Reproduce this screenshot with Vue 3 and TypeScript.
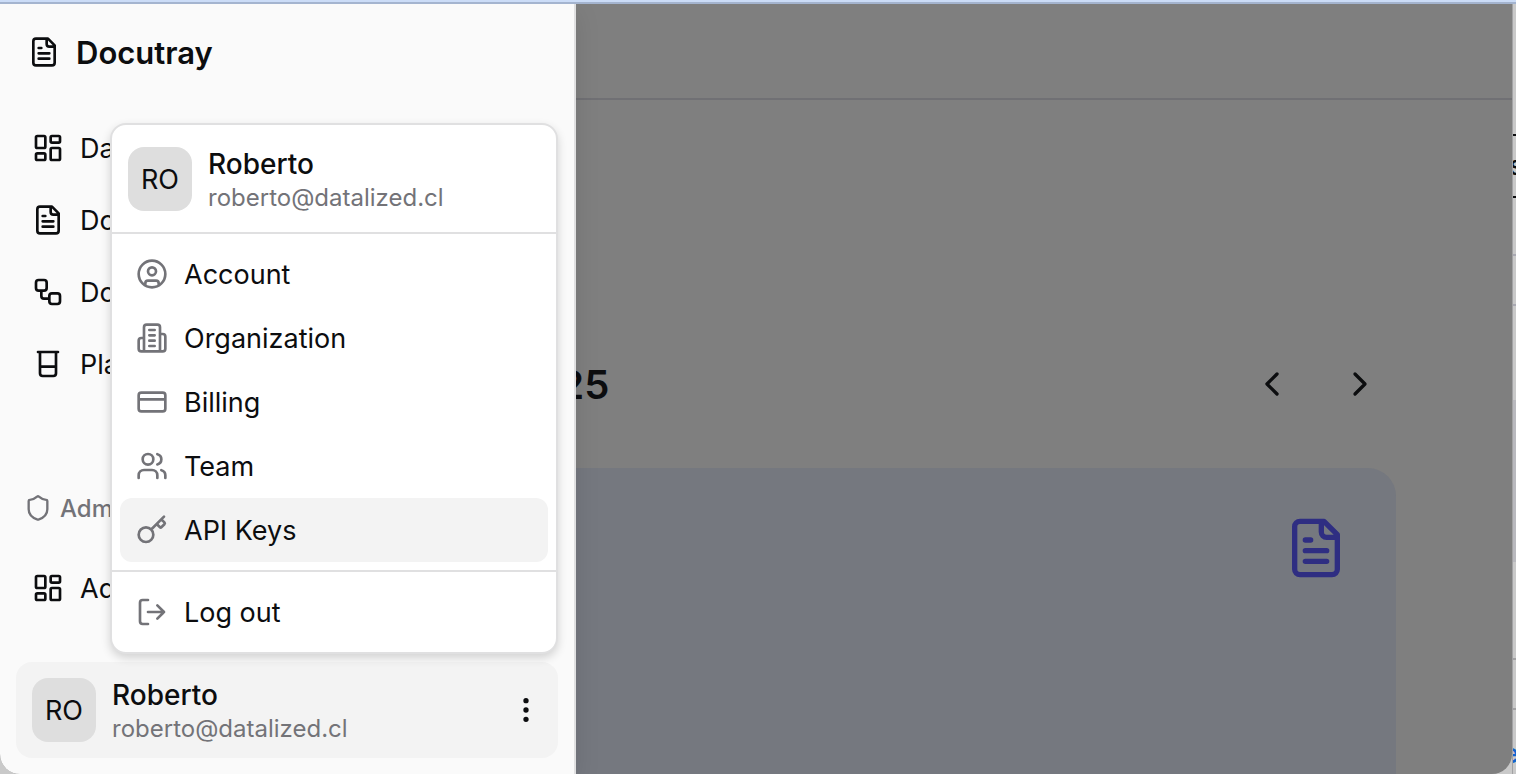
<script setup lang="ts">
type Shape = { d: string }

const icons: Record<string, Shape> = {
  file: {
    d: 'M15 2H6a2 2 0 0 0-2 2v16a2 2 0 0 0 2 2h12a2 2 0 0 0 2-2V7ZM14 2v4a2 2 0 0 0 2 2h4M10 9H8M16 13H8M16 17H8',
  },
  dashboard: {
    d: 'M4 3h5a1 1 0 0 1 1 1v7a1 1 0 0 1-1 1H4a1 1 0 0 1-1-1V4a1 1 0 0 1 1-1ZM15 3h5a1 1 0 0 1 1 1v3a1 1 0 0 1-1 1h-5a1 1 0 0 1-1-1V4a1 1 0 0 1 1-1ZM15 12h5a1 1 0 0 1 1 1v7a1 1 0 0 1-1 1h-5a1 1 0 0 1-1-1v-7a1 1 0 0 1 1-1ZM4 16h5a1 1 0 0 1 1 1v3a1 1 0 0 1-1 1H4a1 1 0 0 1-1-1v-3a1 1 0 0 1 1-1Z',
  },
  workflow: {
    d: 'M5 3h4a2 2 0 0 1 2 2v4a2 2 0 0 1-2 2H5a2 2 0 0 1-2-2V5a2 2 0 0 1 2-2ZM7 11v4a2 2 0 0 0 2 2h4M15 13h4a2 2 0 0 1 2 2v4a2 2 0 0 1-2 2h-4a2 2 0 0 1-2-2v-4a2 2 0 0 1 2-2Z',
  },
  beaker: { d: 'M4.5 3h15M6 3v16a2 2 0 0 0 2 2h8a2 2 0 0 0 2-2V3M6 14h12' },
  shield: {
    d: 'M20 13c0 5-3.5 7.5-7.66 8.95a1 1 0 0 1-.67-.01C7.5 20.5 4 18 4 13V6a1 1 0 0 1 1-1c2 0 4.5-1.2 6.24-2.72a1.17 1.17 0 0 1 1.52 0C14.51 3.81 17 5 19 5a1 1 0 0 1 1 1Z',
  },
  account: {
    d: 'M2 12a10 10 0 1 0 20 0a10 10 0 1 0-20 0M9 10a3 3 0 1 0 6 0a3 3 0 1 0-6 0M7 20.662V19a2 2 0 0 1 2-2h6a2 2 0 0 1 2 2v1.662',
  },
  building: {
    d: 'M6 22V4a2 2 0 0 1 2-2h8a2 2 0 0 1 2 2v18ZM6 12H4a2 2 0 0 0-2 2v6a2 2 0 0 0 2 2h2M18 9h2a2 2 0 0 1 2 2v9a2 2 0 0 1-2 2h-2M10 6h4M10 10h4M10 14h4M10 18h4',
  },
  card: {
    d: 'M4 5h16a2 2 0 0 1 2 2v10a2 2 0 0 1-2 2H4a2 2 0 0 1-2-2V7a2 2 0 0 1 2-2ZM2 10h20',
  },
  users: {
    d: 'M16 21v-2a4 4 0 0 0-4-4H6a4 4 0 0 0-4 4v2M5 7a4 4 0 1 0 8 0a4 4 0 1 0-8 0M22 21v-2a4 4 0 0 0-3-3.87M16 3.13a4 4 0 0 1 0 7.75',
  },
  key: {
    d: 'm15.5 7.5 2.3 2.3a1 1 0 0 0 1.4 0l2.1-2.1a1 1 0 0 0 0-1.4L19 4M21 2l-9.6 9.6M2 15.5a5.5 5.5 0 1 0 11 0a5.5 5.5 0 1 0-11 0',
  },
  logout: { d: 'M9 21H5a2 2 0 0 1-2-2V5a2 2 0 0 1 2-2h4M16 17l5-5-5-5M21 12H9' },
  dots: {
    d: 'M11 5a1 1 0 1 0 2 0a1 1 0 1 0-2 0M11 12a1 1 0 1 0 2 0a1 1 0 1 0-2 0M11 19a1 1 0 1 0 2 0a1 1 0 1 0-2 0',
  },
  left: { d: 'm15 18-6-6 6-6' },
  right: { d: 'm9 18 6-6-6-6' },
}

const navItems = [
  { icon: 'dashboard', label: 'Dashboard' },
  { icon: 'file', label: 'Documents' },
  { icon: 'workflow', label: 'Document Types' },
  { icon: 'beaker', label: 'Playground' },
]

const menuItems = [
  { icon: 'account', label: 'Account', active: false },
  { icon: 'building', label: 'Organization', active: false },
  { icon: 'card', label: 'Billing', active: false },
  { icon: 'users', label: 'Team', active: false },
  { icon: 'key', label: 'API Keys', active: true },
]

const user = { initials: 'RO', name: 'Roberto', email: 'roberto@datalized.cl' }
</script>

<template>
  <div class="desktop">
    <div class="window">
      <main class="page">
        <header class="topbar"></header>
        <section class="content">
          <div class="period">
            <h1>2025</h1>
            <div class="pager">
              <button type="button" aria-label="Previous">
                <svg class="icon medium" viewBox="0 0 24 24"><path :d="icons.left.d" /></svg>
              </button>
              <button type="button" aria-label="Next">
                <svg class="icon medium" viewBox="0 0 24 24"><path :d="icons.right.d" /></svg>
              </button>
            </div>
          </div>
          <article class="stat">
            <svg class="icon large" viewBox="0 0 24 24"><path :d="icons.file.d" /></svg>
          </article>
        </section>
      </main>

      <aside class="drawer">
        <div class="brand">
          <svg class="icon" viewBox="0 0 24 24"><path :d="icons.file.d" /></svg>
          <span class="label">Docutray</span>
        </div>
        <nav class="nav">
          <a v-for="item in navItems" :key="item.label" href="#" class="row">
            <svg class="icon" viewBox="0 0 24 24"><path :d="icons[item.icon].d" /></svg>
            <span class="label">{{ item.label }}</span>
          </a>
        </nav>
        <nav class="nav admin">
          <div class="group">
            <svg class="icon small" viewBox="0 0 24 24"><path :d="icons.shield.d" /></svg>
            <span class="label">Administration</span>
          </div>
          <a href="#" class="row">
            <svg class="icon" viewBox="0 0 24 24"><path :d="icons.dashboard.d" /></svg>
            <span class="label">Admin</span>
          </a>
        </nav>

        <div class="footer">
          <button type="button" class="profile trigger" aria-haspopup="menu" aria-expanded="true">
            <span class="avatar">{{ user.initials }}</span>
            <span class="identity">
              <strong>{{ user.name }}</strong>
              <small>{{ user.email }}</small>
            </span>
            <svg class="icon" viewBox="0 0 24 24"><path class="dots" :d="icons.dots.d" /></svg>
          </button>

          <div class="menu" role="menu">
            <div class="profile summary">
              <span class="avatar">{{ user.initials }}</span>
              <span class="identity">
                <strong>{{ user.name }}</strong>
                <small>{{ user.email }}</small>
              </span>
            </div>
            <div class="actions">
              <button
                v-for="item in menuItems"
                :key="item.label"
                type="button"
                role="menuitem"
                class="row"
                :class="{ active: item.active }"
              >
                <svg class="icon" viewBox="0 0 24 24"><path :d="icons[item.icon].d" /></svg>
                <span class="label">{{ item.label }}</span>
              </button>
            </div>
            <div class="actions">
              <button type="button" role="menuitem" class="row">
                <svg class="icon" viewBox="0 0 24 24"><path :d="icons.logout.d" /></svg>
                <span class="label">Log out</span>
              </button>
            </div>
          </div>
        </div>
      </aside>
    </div>
    <div class="behind">
      <span class="sliver-text">s</span>
      <span class="sliver-link">e</span>
    </div>
  </div>
</template>

<style>
body {
  margin: 0;
}
</style>

<style scoped>
* {
  box-sizing: border-box;
}

.desktop {
  display: grid;
  grid-template-columns: 1fr 4px;
  height: 100vh;
  padding-top: 4px;
  overflow: hidden;
  background: linear-gradient(#cbdcf7 2px, #a4b4cf 2px, #a4b4cf 4px, #c9c9c9 4px);
  color: #0c0d0f;
  font-family: Inter, "Liberation Sans", sans-serif;
  font-size: 27px;
  line-height: 40px;
}

.window {
  position: relative;
  min-width: 0;
  overflow: hidden;
  border-radius: 0 0 20px 20px;
  background: #7f7f7f;
}

.page {
  display: flex;
  flex-direction: column;
  height: 100%;
}

.topbar {
  flex: none;
  height: 96px;
  border-bottom: 2px solid #707074;
}

.content {
  flex: 1;
  display: flex;
  flex-direction: column;
  padding: 248px 116px 0 508px;
}

.period {
  display: flex;
  align-items: center;
  justify-content: space-between;
  height: 72px;
}

h1 {
  margin: 0;
  padding-top: 2px;
  font-size: 40px;
  line-height: 56px;
  font-weight: 600;
}

.pager {
  display: flex;
  gap: 16px;
}

.pager button {
  display: grid;
  place-items: center;
  width: 72px;
  height: 72px;
}

.stat {
  flex: 1;
  display: flex;
  justify-content: flex-end;
  margin-top: 48px;
  padding: 48px;
  border-radius: 28px 28px 0 0;
  background: #75787f;
  color: #2f2e82;
}

.drawer {
  position: absolute;
  inset: 0 auto 0 0;
  display: flex;
  flex-direction: column;
  width: 576px;
  padding: 16px;
  border-right: 2px solid #e0e0e1;
  background: #fafafa;
  box-shadow: 0 8px 24px rgba(0, 0, 0, 0.1);
}

button {
  border: 0;
  padding: 0;
  background: none;
  color: inherit;
  font: inherit;
  text-align: left;
}

.icon {
  flex: none;
  width: 32px;
  height: 32px;
  fill: none;
  stroke: currentColor;
  stroke-width: 2;
  stroke-linecap: round;
  stroke-linejoin: round;
}

.icon.small {
  width: 28px;
  height: 28px;
}

.icon.medium {
  width: 40px;
  height: 40px;
}

.icon.large {
  width: 64px;
  height: 64px;
}

.dots {
  fill: currentColor;
}

.label {
  padding-top: 2px;
}

.brand {
  display: flex;
  align-items: center;
  gap: 16px;
  height: 64px;
  padding: 0 12px;
  font-size: 31px;
  font-weight: 600;
}

.nav {
  display: flex;
  flex-direction: column;
  gap: 8px;
  margin-top: 32px;
}

.nav.admin {
  margin-top: 80px;
  gap: 16px;
}

.row {
  display: flex;
  align-items: center;
  gap: 16px;
  width: 100%;
  height: 64px;
  padding: 0 16px;
  border-radius: 12px;
  color: inherit;
  text-decoration: none;
  white-space: nowrap;
}

.group {
  display: flex;
  align-items: center;
  gap: 8px;
  height: 64px;
  padding: 0 8px;
  color: #737378;
  font-size: 24px;
  font-weight: 500;
}

.footer {
  position: relative;
  margin-top: auto;
}

.profile {
  display: flex;
  align-items: center;
  gap: 16px;
}

.trigger {
  width: 100%;
  height: 96px;
  padding: 16px;
  border-radius: 16px;
  background: #f3f3f3;
}

.avatar {
  flex: none;
  display: grid;
  place-items: center;
  width: 64px;
  height: 64px;
  padding-top: 2px;
  border-radius: 16px;
  background: #dedede;
}

.identity {
  flex: 1;
  display: flex;
  flex-direction: column;
  padding-top: 2px;
}

.identity strong {
  font-size: 28px;
  font-weight: 500;
  line-height: 36px;
}

.identity small {
  color: #737378;
  font-size: 24px;
  line-height: 32px;
}

.menu {
  position: absolute;
  right: 0;
  bottom: 104px;
  left: 94px;
  overflow: hidden;
  border: 2px solid #e0e0e1;
  border-radius: 16px;
  background: #fff;
  box-shadow: 0 4px 10px rgba(0, 0, 0, 0.16);
}

.summary {
  padding: 22px 16px 21px;
}

.summary .identity {
  margin: -4px 0;
}

.actions {
  padding: 8px;
  border-top: 2px solid #e0e0e1;
}

.actions .icon {
  color: #737378;
}

.active {
  background: #f3f3f3;
}

.behind {
  position: relative;
  overflow: hidden;
  border-left: 1px solid #a2a2a4;
  background: linear-gradient(
    #c9c9c9 130px,
    #0c0d0f 130px,
    #0c0d0f 132px,
    #c9c9c9 132px,
    #c9c9c9 192px,
    #0c0d0f 192px,
    #0c0d0f 194px,
    #c9c9c9 194px,
    #c9c9c9 250px,
    #a9a9b2 250px,
    #a9a9b2 252px,
    #c9c9c9 252px,
    #c9c9c9 300px,
    #a9a9b2 300px,
    #a9a9b2 302px,
    #c9c9c9 302px,
    #c9c9c9 396px,
    #b9b9be 396px,
    #b9b9be 558px,
    #c9c9c9 558px,
    #c9c9c9 654px,
    #a2a2a4 654px,
    #a2a2a4 656px,
    #c9c9c9 656px,
    #c9c9c9 704px,
    #a2a2a4 704px,
    #a2a2a4 706px,
    #c9c9c9 706px
  );
}

.sliver-text,
.sliver-link {
  position: absolute;
  top: 142px;
  left: -4px;
  font-weight: 500;
}

.sliver-link {
  top: auto;
  bottom: 0;
  left: -10px;
  color: #1263cf;
}
</style>
